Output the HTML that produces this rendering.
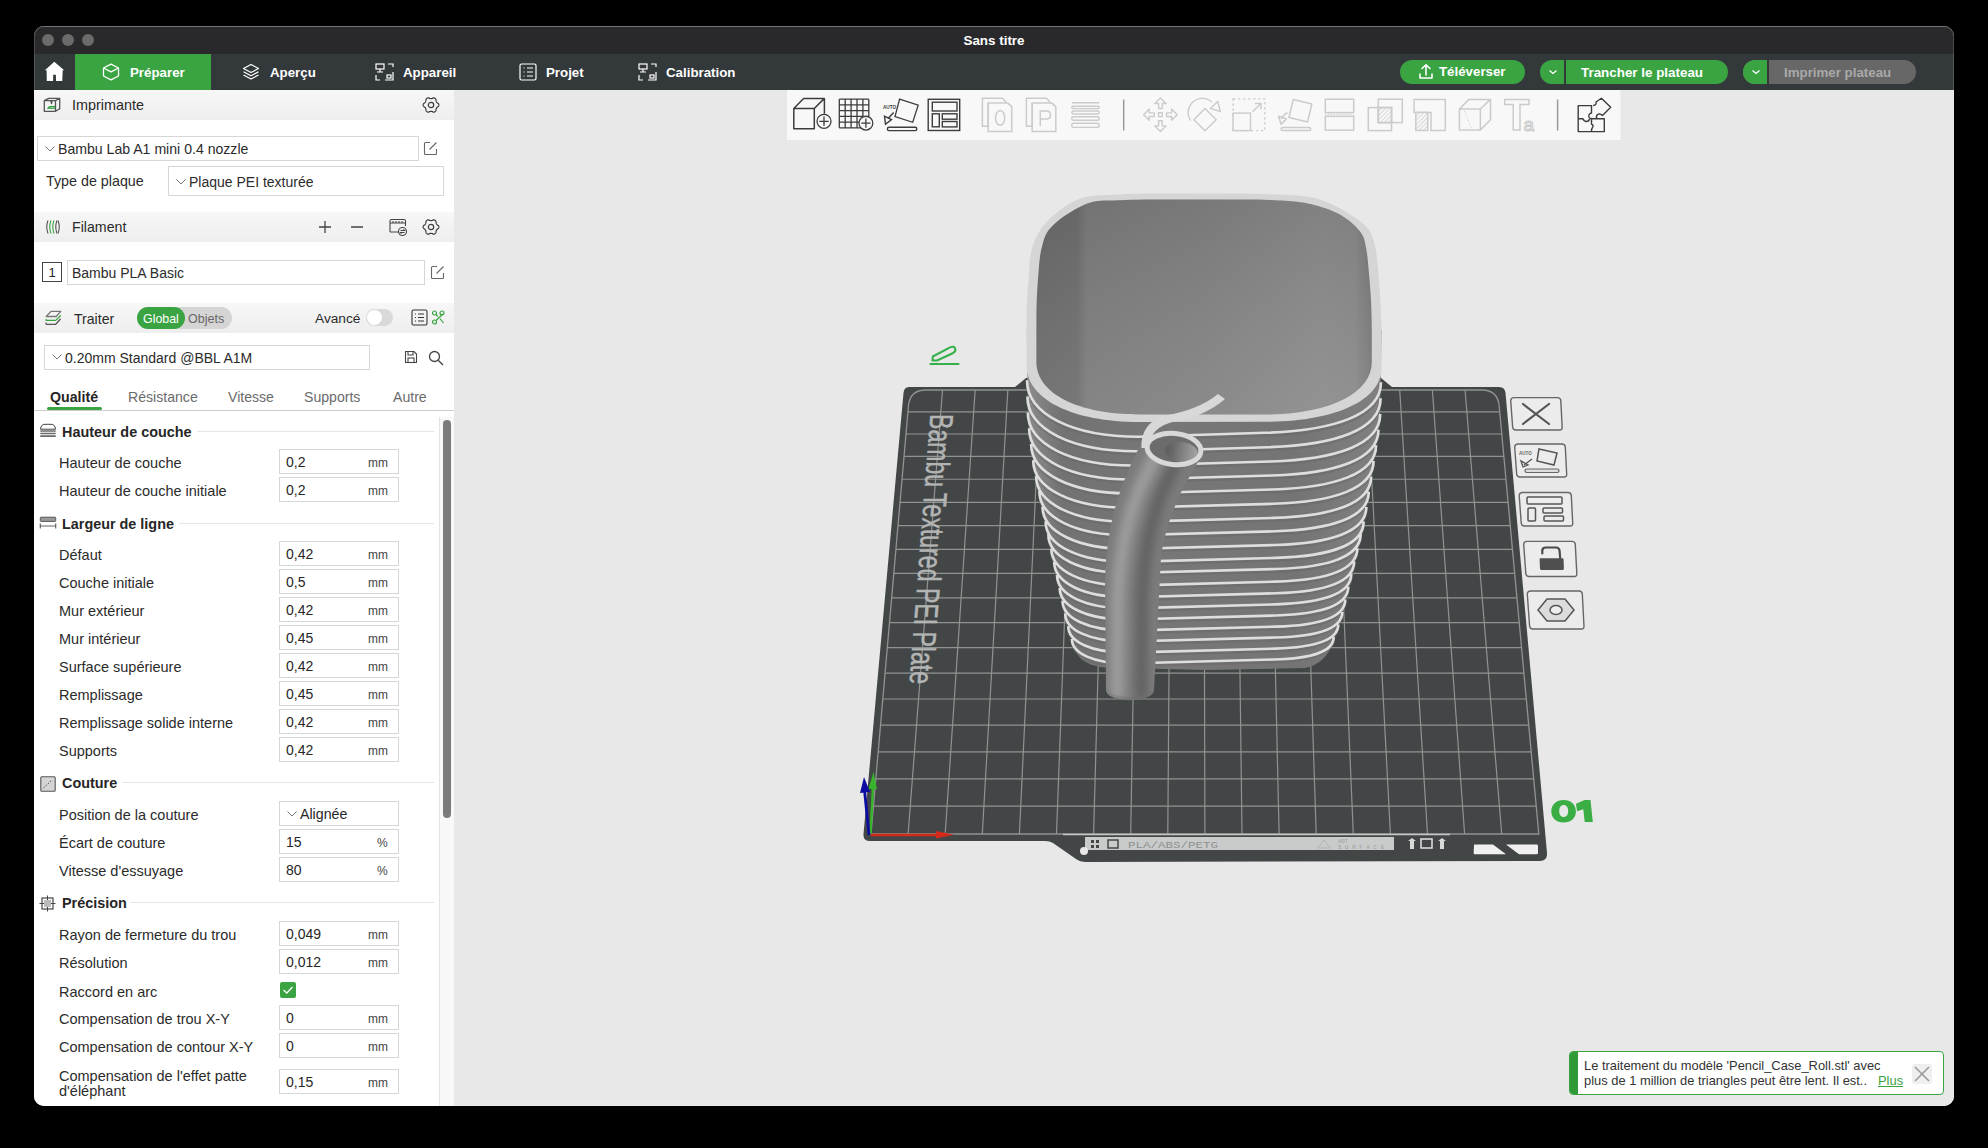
<!DOCTYPE html><html><head><meta charset="utf-8"><style>
*{box-sizing:border-box;margin:0;padding:0}
html,body{width:1988px;height:1148px;overflow:hidden;background:#000;font-family:"Liberation Sans", sans-serif;}
.a{position:absolute}
.t{position:absolute;white-space:nowrap;line-height:1}
.lb{position:absolute;white-space:nowrap;line-height:1;font-size:14.5px;color:#2b2b2b}
.in{position:absolute;background:#fff;border:1px solid #d6d6d6}
.hd{position:absolute;white-space:nowrap;line-height:1;font-size:14.4px;font-weight:bold;color:#262626}
svg{position:absolute;overflow:visible}
#win{position:absolute;left:34px;top:26px;width:1920px;height:1080px;border-radius:10px;overflow:hidden;background:#e8e8e8}
</style></head><body>
<div id="win">
<div class="a" style="left:-34px;top:-26px;width:1988px;height:1148px">

<div class="a" style="left:34px;top:26px;width:1920px;height:28px;background:#29292b;border-top:1px solid #5a5a5c"></div>
<div class="a" style="left:42px;top:34px;width:12px;height:12px;border-radius:6px;background:#6a6a6b"></div>
<div class="a" style="left:62px;top:34px;width:12px;height:12px;border-radius:6px;background:#6a6a6b"></div>
<div class="a" style="left:82px;top:34px;width:12px;height:12px;border-radius:6px;background:#6a6a6b"></div>
<div class="t" style="left:34px;width:1920px;top:33.5px;text-align:center;color:#fff;font-weight:bold;font-size:13.4px">Sans titre</div>
<div class="a" style="left:34px;top:54px;width:1920px;height:36px;background:#33383b"></div>
<div class="a" style="left:75px;top:54px;width:136px;height:36px;background:#3aa443"></div>
<svg style="left:44px;top:61px" width="21" height="21" viewBox="0 0 21 21"><path d="M10.3 0.8 L20.2 9.3 L18.7 9.3 L18.3 20 L12 20 L11.9 13.8 L9.2 13.8 L9.1 20 L2.8 20 L2.6 9.3 L0.9 9.3 Z" fill="#fff"/></svg>
<svg style="left:102px;top:63px" width="18" height="18" viewBox="0 0 18 18" fill="none" stroke="#fff" stroke-width="1.3" stroke-linejoin="round"><path d="M9 1.2 L16.5 5 L16.5 13 L9 16.8 L1.5 13 L1.5 5 Z"/><path d="M1.5 5 L9 8.8 L16.5 5"/></svg>
<div class="t" style="left:130px;top:66px;color:#fff;font-weight:bold;font-size:13.3px">Préparer</div>
<svg style="left:242px;top:63px" width="18" height="18" viewBox="0 0 18 18" fill="none" stroke="#fff" stroke-width="1.2" stroke-linejoin="round"><path d="M9 1.5 L16.5 5.5 L9 9.5 L1.5 5.5 Z"/><path d="M1.5 8.8 L9 12.8 L16.5 8.8"/><path d="M1.5 12 L9 16 L16.5 12"/></svg>
<div class="t" style="left:270px;top:66px;color:#fff;font-weight:bold;font-size:13.3px">Aperçu</div>
<svg style="left:375px;top:63px" width="19" height="18" viewBox="0 0 19 18" fill="none" stroke="#fff" stroke-width="1.2"><rect x="1" y="1" width="8" height="5"/><path d="M5 6 V9 M2 9 H8"/><path d="M13 1 H18 V4"/><path d="M1 12 V17 H5"/><path d="M18 9 V17 H10"/><rect x="12" y="12" width="4" height="3"/></svg>
<div class="t" style="left:403px;top:66px;color:#fff;font-weight:bold;font-size:13.3px">Appareil</div>
<svg style="left:519px;top:63px" width="18" height="18" viewBox="0 0 18 18" fill="none" stroke="#fff" stroke-width="1.2"><rect x="1" y="1" width="16" height="16" rx="1.5"/><path d="M4.5 5 H5.5 M4.5 9 H5.5 M4.5 13 H5.5 M8 5 H14 M8 9 H14 M8 13 H14"/></svg>
<div class="t" style="left:546px;top:66px;color:#fff;font-weight:bold;font-size:13.3px">Projet</div>
<svg style="left:638px;top:63px" width="19" height="18" viewBox="0 0 19 18" fill="none" stroke="#fff" stroke-width="1.2"><rect x="1" y="1" width="8" height="5"/><path d="M5 6 V9 M2 9 H8"/><path d="M13 1 H18 V4"/><path d="M1 12 V17 H5"/><path d="M18 9 V17 H10"/><rect x="12" y="12" width="4" height="3"/></svg>
<div class="t" style="left:666px;top:66px;color:#fff;font-weight:bold;font-size:13.3px">Calibration</div>
<div class="a" style="left:1400px;top:60px;width:125px;height:24px;border-radius:12px;background:#3aa443"></div>
<svg style="left:1418px;top:63px" width="16" height="17" viewBox="0 0 16 17" fill="none" stroke="#fff" stroke-width="1.6" stroke-linecap="round" stroke-linejoin="round"><path d="M8 12 V2 M4 5.5 L8 1.8 L12 5.5"/><path d="M2 11 V15 H14 V11"/></svg>
<div class="t" style="left:1439px;top:65px;color:#fff;font-weight:bold;font-size:13.3px">Téléverser</div>
<div class="a" style="left:1540px;top:60px;width:188px;height:24px;border-radius:12px;background:#3aa443"></div>
<div class="a" style="left:1564px;top:60px;width:2px;height:24px;background:#33383b"></div>
<svg style="left:1547px;top:68px" width="12" height="8" viewBox="0 0 12 8" fill="none" stroke="#fff" stroke-width="1.3"><path d="M2.5 2.5 L6 5.5 L9.5 2.5"/></svg>
<div class="t" style="left:1581px;top:66px;color:#fff;font-weight:bold;font-size:13.4px">Trancher le plateau</div>
<div class="a" style="left:1743px;top:60px;width:173px;height:24px;border-radius:12px;background:#676767"></div>
<div class="a" style="left:1743px;top:60px;width:25px;height:24px;border-radius:12px 0 0 12px;background:#3aa443"></div>
<div class="a" style="left:1767px;top:60px;width:2px;height:24px;background:#33383b"></div>
<svg style="left:1750px;top:68px" width="12" height="8" viewBox="0 0 12 8" fill="none" stroke="#fff" stroke-width="1.3"><path d="M2.5 2.5 L6 5.5 L9.5 2.5"/></svg>
<div class="t" style="left:1784px;top:66px;color:#a9a9a9;font-weight:bold;font-size:13.3px">Imprimer plateau</div>
<div class="a" style="left:34px;top:90px;width:420px;height:1016px;background:#fff"></div>
<div class="a" style="left:34px;top:90px;width:420px;height:30px;background:linear-gradient(#f7f7f7,#eeeeee)"></div>
<svg style="left:38px;top:92px" width="30" height="30" viewBox="0 0 30 30" fill="none" stroke="#555" stroke-width="1.3" stroke-linejoin="round"><path d="M6.3 8.6 H17.5 V19.3 H6.3 Z M6.3 8.6 L10.7 6.3 H21.7 L17.5 8.6 M21.7 6.3 V16.7 L17.5 19.3"/><path d="M12.9 8.6 L13.5 11.6 L14.1 8.6" fill="#555"/><path d="M8.8 16.8 Q10.2 14.1 12.4 14.1 H17 V16.8 Z" fill="#2a9a35" stroke="none"/><path d="M12.2 15.45 H17" stroke="#b6dcb9" stroke-width="0.7"/></svg>
<div class="lb" style="left:72px;top:98px;font-size:14.4px">Imprimante</div>
<svg style="left:422px;top:96px" width="18" height="18" viewBox="0 0 18 18" fill="none" stroke="#3e3e3e" stroke-width="1.2"><path d="M16.85 9.00 L16.82 9.34 L16.75 9.68 L16.62 10.00 L16.45 10.31 L16.22 10.60 L15.86 10.84 L15.49 11.05 L15.24 11.27 L15.02 11.49 L14.82 11.71 L14.65 11.94 L14.50 12.17 L14.37 12.42 L14.26 12.68 L14.17 12.96 L14.09 13.27 L14.02 13.60 L14.02 14.02 L13.99 14.45 L13.86 14.79 L13.68 15.10 L13.46 15.37 L13.21 15.61 L12.93 15.80 L12.62 15.95 L12.29 16.05 L11.94 16.10 L11.59 16.11 L11.22 16.05 L10.84 15.86 L10.47 15.65 L10.15 15.54 L9.85 15.46 L9.56 15.40 L9.28 15.36 L9.00 15.35 L8.72 15.36 L8.44 15.40 L8.15 15.46 L7.85 15.54 L7.53 15.65 L7.16 15.86 L6.78 16.05 L6.41 16.11 L6.06 16.10 L5.71 16.05 L5.38 15.95 L5.08 15.80 L4.79 15.61 L4.54 15.37 L4.32 15.10 L4.14 14.79 L4.01 14.45 L3.98 14.02 L3.98 13.60 L3.91 13.27 L3.83 12.96 L3.74 12.68 L3.63 12.42 L3.50 12.18 L3.35 11.94 L3.18 11.71 L2.98 11.49 L2.76 11.27 L2.51 11.05 L2.14 10.84 L1.78 10.60 L1.55 10.31 L1.38 10.00 L1.25 9.68 L1.18 9.34 L1.15 9.00 L1.18 8.66 L1.25 8.32 L1.38 8.00 L1.55 7.69 L1.78 7.40 L2.14 7.16 L2.51 6.95 L2.76 6.73 L2.98 6.51 L3.18 6.29 L3.35 6.06 L3.50 5.82 L3.63 5.58 L3.74 5.32 L3.83 5.04 L3.91 4.73 L3.98 4.40 L3.98 3.98 L4.01 3.55 L4.14 3.21 L4.32 2.90 L4.54 2.63 L4.79 2.39 L5.07 2.20 L5.38 2.05 L5.71 1.95 L6.06 1.90 L6.41 1.89 L6.78 1.95 L7.16 2.14 L7.53 2.35 L7.85 2.46 L8.15 2.54 L8.44 2.60 L8.72 2.64 L9.00 2.65 L9.28 2.64 L9.56 2.60 L9.85 2.54 L10.15 2.46 L10.47 2.35 L10.84 2.14 L11.22 1.95 L11.59 1.89 L11.94 1.90 L12.29 1.95 L12.62 2.05 L12.92 2.20 L13.21 2.39 L13.46 2.63 L13.68 2.90 L13.86 3.21 L13.99 3.55 L14.02 3.98 L14.02 4.40 L14.09 4.73 L14.17 5.04 L14.26 5.32 L14.37 5.58 L14.50 5.83 L14.65 6.06 L14.82 6.29 L15.02 6.51 L15.24 6.73 L15.49 6.95 L15.86 7.16 L16.22 7.40 L16.45 7.69 L16.62 8.00 L16.75 8.32 L16.82 8.66 Z"/><circle cx="9" cy="9" r="2.7"/></svg>
<div class="in" style="left:37px;top:136px;width:382px;height:25px"></div>
<svg style="left:44px;top:145px" width="12" height="8" viewBox="0 0 12 8" fill="none" stroke="#777" stroke-width="1"><path d="M1.5 1.5 L6 6 L10.5 1.5"/></svg>
<div class="lb" style="left:58px;top:142px;font-size:14.1px">Bambu Lab A1 mini 0.4 nozzle</div>
<svg style="left:423px;top:141px" width="15" height="15" viewBox="0 0 15 15" fill="none" stroke="#666" stroke-width="1.1"><path d="M7 1.5 H2.5 Q1.5 1.5 1.5 2.5 V12.5 Q1.5 13.5 2.5 13.5 H12.5 Q13.5 13.5 13.5 12.5 V8"/><path d="M6.5 8.5 L13.5 1.5"/></svg>
<div class="lb" style="left:46px;top:174px;font-size:14.3px">Type de plaque</div>
<div class="in" style="left:168px;top:166px;width:276px;height:30px"></div>
<svg style="left:175px;top:178px" width="12" height="8" viewBox="0 0 12 8" fill="none" stroke="#777" stroke-width="1"><path d="M1.5 1.5 L6 6 L10.5 1.5"/></svg>
<div class="lb" style="left:189px;top:175px;font-size:14px">Plaque PEI texturée</div>
<div class="a" style="left:34px;top:212px;width:420px;height:30px;background:linear-gradient(#f7f7f7,#eeeeee)"></div>
<svg style="left:45px;top:219px" width="16" height="16" viewBox="0 0 16 16" fill="none" stroke-width="1.1"><path d="M3 1.5 Q0.5 8 3 14.5" stroke="#555"/><path d="M13 1.5 Q15.5 8 13 14.5" stroke="#555"/><path d="M6 1.5 Q3.5 8 6 14.5 M9 1.5 Q6.5 8 9 14.5" stroke="#3aa443"/><path d="M12 1.5 Q9.5 8 12 14.5" stroke="#555"/></svg>
<div class="lb" style="left:72px;top:220px;font-size:14.2px">Filament</div>
<svg style="left:318px;top:220px" width="14" height="14" viewBox="0 0 14 14" stroke="#444" stroke-width="1.3"><path d="M7 1 V13 M1 7 H13"/></svg>
<svg style="left:350px;top:220px" width="14" height="14" viewBox="0 0 14 14" stroke="#444" stroke-width="1.3"><path d="M1 7 H13"/></svg>
<svg style="left:389px;top:218px" width="19" height="18" viewBox="0 0 19 18" fill="none" stroke="#444" stroke-width="1.1"><path d="M1 14 V3 Q1 1.5 2.5 1.5 H15 Q16.5 1.5 16.5 3 V8"/><path d="M1 5 H16.5 M4 3 V5 M7 3 V5 M10 3 V5 M13 3 V5"/><path d="M1 14 H9"/><circle cx="13.5" cy="13.5" r="4"/><path d="M11.5 12.5 H15.5 L14.5 11.5 M15.5 14.5 H11.5 L12.5 15.5"/></svg>
<svg style="left:422px;top:218px" width="18" height="18" viewBox="0 0 18 18" fill="none" stroke="#3e3e3e" stroke-width="1.2"><path d="M16.85 9.00 L16.82 9.34 L16.75 9.68 L16.62 10.00 L16.45 10.31 L16.22 10.60 L15.86 10.84 L15.49 11.05 L15.24 11.27 L15.02 11.49 L14.82 11.71 L14.65 11.94 L14.50 12.17 L14.37 12.42 L14.26 12.68 L14.17 12.96 L14.09 13.27 L14.02 13.60 L14.02 14.02 L13.99 14.45 L13.86 14.79 L13.68 15.10 L13.46 15.37 L13.21 15.61 L12.93 15.80 L12.62 15.95 L12.29 16.05 L11.94 16.10 L11.59 16.11 L11.22 16.05 L10.84 15.86 L10.47 15.65 L10.15 15.54 L9.85 15.46 L9.56 15.40 L9.28 15.36 L9.00 15.35 L8.72 15.36 L8.44 15.40 L8.15 15.46 L7.85 15.54 L7.53 15.65 L7.16 15.86 L6.78 16.05 L6.41 16.11 L6.06 16.10 L5.71 16.05 L5.38 15.95 L5.08 15.80 L4.79 15.61 L4.54 15.37 L4.32 15.10 L4.14 14.79 L4.01 14.45 L3.98 14.02 L3.98 13.60 L3.91 13.27 L3.83 12.96 L3.74 12.68 L3.63 12.42 L3.50 12.18 L3.35 11.94 L3.18 11.71 L2.98 11.49 L2.76 11.27 L2.51 11.05 L2.14 10.84 L1.78 10.60 L1.55 10.31 L1.38 10.00 L1.25 9.68 L1.18 9.34 L1.15 9.00 L1.18 8.66 L1.25 8.32 L1.38 8.00 L1.55 7.69 L1.78 7.40 L2.14 7.16 L2.51 6.95 L2.76 6.73 L2.98 6.51 L3.18 6.29 L3.35 6.06 L3.50 5.82 L3.63 5.58 L3.74 5.32 L3.83 5.04 L3.91 4.73 L3.98 4.40 L3.98 3.98 L4.01 3.55 L4.14 3.21 L4.32 2.90 L4.54 2.63 L4.79 2.39 L5.07 2.20 L5.38 2.05 L5.71 1.95 L6.06 1.90 L6.41 1.89 L6.78 1.95 L7.16 2.14 L7.53 2.35 L7.85 2.46 L8.15 2.54 L8.44 2.60 L8.72 2.64 L9.00 2.65 L9.28 2.64 L9.56 2.60 L9.85 2.54 L10.15 2.46 L10.47 2.35 L10.84 2.14 L11.22 1.95 L11.59 1.89 L11.94 1.90 L12.29 1.95 L12.62 2.05 L12.92 2.20 L13.21 2.39 L13.46 2.63 L13.68 2.90 L13.86 3.21 L13.99 3.55 L14.02 3.98 L14.02 4.40 L14.09 4.73 L14.17 5.04 L14.26 5.32 L14.37 5.58 L14.50 5.83 L14.65 6.06 L14.82 6.29 L15.02 6.51 L15.24 6.73 L15.49 6.95 L15.86 7.16 L16.22 7.40 L16.45 7.69 L16.62 8.00 L16.75 8.32 L16.82 8.66 Z"/><circle cx="9" cy="9" r="2.7"/></svg>
<div class="a" style="left:42px;top:262px;width:20px;height:20px;border:1px solid #444;background:#fff"></div>
<div class="t" style="left:42px;width:20px;text-align:center;top:266px;font-size:13px;color:#222">1</div>
<div class="in" style="left:67px;top:260px;width:358px;height:25px"></div>
<div class="lb" style="left:72px;top:266px;font-size:14px">Bambu PLA Basic</div>
<svg style="left:430px;top:265px" width="15" height="15" viewBox="0 0 15 15" fill="none" stroke="#666" stroke-width="1.1"><path d="M7 1.5 H2.5 Q1.5 1.5 1.5 2.5 V12.5 Q1.5 13.5 2.5 13.5 H12.5 Q13.5 13.5 13.5 12.5 V8"/><path d="M6.5 8.5 L13.5 1.5"/></svg>
<div class="a" style="left:34px;top:303px;width:420px;height:30px;background:linear-gradient(#f7f7f7,#eeeeee)"></div>
<svg style="left:36px;top:300px" width="30" height="36" viewBox="0 0 30 36" fill="none" stroke-width="1.3" stroke-linejoin="round" stroke-linecap="round"><path d="M10.2 16.5 L15 11.4 H24.8 L20.1 16.5 Z" stroke="#777"/><path d="M10 19.6 L10.3 20.4 H19.7 L24.5 15.7" stroke="#3aa443"/><path d="M10 23.2 L10.3 24.3 H19.7 L24.3 19.3" stroke="#555"/></svg>
<div class="lb" style="left:74px;top:312px;font-size:14.1px">Traiter</div>
<div class="a" style="left:137px;top:307px;width:95px;height:22px;border-radius:11px;background:#d5d5d5"></div>
<div class="a" style="left:137px;top:307px;width:48px;height:22px;border-radius:11px;background:#3aa443"></div>
<div class="t" style="left:143px;top:312.5px;font-size:12.4px;color:#fff">Global</div>
<div class="t" style="left:188px;top:312.5px;font-size:12.5px;color:#666">Objets</div>
<div class="lb" style="left:315px;top:312px;font-size:13.7px">Avancé</div>
<div class="a" style="left:366px;top:309px;width:27px;height:17px;border-radius:9px;background:#d9d9d9"></div>
<div class="a" style="left:367px;top:310px;width:15px;height:15px;border-radius:8px;background:#fff"></div>
<svg style="left:411px;top:309px" width="17" height="17" viewBox="0 0 17 17" fill="none" stroke="#333" stroke-width="1.1"><rect x="1" y="1" width="15" height="15" rx="1.5"/><path d="M4 5 H5 M4 8.5 H5 M4 12 H5 M7 5 H13 M7 8.5 H13 M7 12 H13"/></svg>
<svg style="left:431px;top:310px" width="14" height="15" viewBox="0 0 14 15" fill="none" stroke="#3aa443" stroke-width="1.2"><circle cx="3.5" cy="3" r="2"/><circle cx="11" cy="3" r="2"/><circle cx="3.5" cy="12" r="2"/><path d="M5 10.5 L12 4 M5 4.5 L7 6.5 M9 8.5 L12.5 13"/></svg>
<div class="in" style="left:44px;top:345px;width:326px;height:25px"></div>
<svg style="left:51px;top:353px" width="12" height="8" viewBox="0 0 12 8" fill="none" stroke="#777" stroke-width="1"><path d="M1.5 1.5 L6 6 L10.5 1.5"/></svg>
<div class="lb" style="left:65px;top:351px;font-size:14px">0.20mm Standard @BBL A1M</div>
<svg style="left:404px;top:350px" width="14" height="14" viewBox="0 0 14 14" fill="none" stroke="#444" stroke-width="1.1"><path d="M1.5 1.5 H10 L12.5 4 V12.5 H1.5 Z"/><path d="M4 1.5 V5 H9 V1.5"/><rect x="4" y="8" width="6" height="4.5"/></svg>
<svg style="left:428px;top:350px" width="16" height="16" viewBox="0 0 16 16" fill="none" stroke="#444" stroke-width="1.3"><circle cx="6.5" cy="6.5" r="5"/><path d="M10.2 10.2 L15 15"/></svg>
<div class="t" style="left:50px;top:390px;font-size:14.1px;color:#262626;font-weight:bold;font-size:14.2px">Qualité</div>
<div class="t" style="left:128px;top:390px;font-size:14.1px;color:#6b6b6b;">Résistance</div>
<div class="t" style="left:228px;top:390px;font-size:14.1px;color:#6b6b6b;">Vitesse</div>
<div class="t" style="left:304px;top:390px;font-size:14.1px;color:#6b6b6b;">Supports</div>
<div class="t" style="left:393px;top:390px;font-size:14.1px;color:#6b6b6b;">Autre</div>
<div class="a" style="left:34px;top:410px;width:420px;height:1px;background:#cdcdcd"></div>
<div class="a" style="left:47px;top:407px;width:55px;height:3px;border-radius:2px;background:#3aa443"></div>
<div class="a" style="left:439px;top:417px;width:15px;height:689px;background:#f8f8f8;border-left:1px solid #e3e3e3"></div>
<div class="a" style="left:443px;top:420px;width:8px;height:398px;border-radius:4px;background:#7b7b7b"></div>
<svg style="left:38px;top:422px" width="20" height="18" viewBox="0 0 20 18" fill="none" stroke="#444" stroke-width="1"><path d="M2.5 7.2 Q3 2.3 7 2.3 H13 Q17 2.3 17.5 7.2 Z"/><path d="M2.3 8.3 H17.7 V9.7 H2.3 Z M2.3 10.8 H17.7 V12.2 H2.3 Z M2.3 13.3 H17.7 V15 H2.3 Z" fill="#6a6a6a" stroke="none"/></svg>
<div class="hd" style="left:62px;top:425px">Hauteur de couche</div>
<div class="a" style="left:197px;top:431px;width:237px;height:1px;background:#e6e6e6"></div>
<div class="lb" style="left:59px;top:456px">Hauteur de couche</div>
<div class="in" style="left:279px;top:449px;width:120px;height:25px"></div>
<div class="t" style="left:286px;top:455px;font-size:14px;color:#262626">0,2</div>
<div class="t" style="left:368px;top:457px;font-size:12px;color:#444">mm</div>
<div class="lb" style="left:59px;top:484px">Hauteur de couche initiale</div>
<div class="in" style="left:279px;top:477px;width:120px;height:25px"></div>
<div class="t" style="left:286px;top:483px;font-size:14px;color:#262626">0,2</div>
<div class="t" style="left:368px;top:485px;font-size:12px;color:#444">mm</div>
<svg style="left:38px;top:515px" width="20" height="16" viewBox="0 0 20 16" fill="none"><rect x="2.3" y="2.2" width="15.4" height="4.2" rx="0.8" fill="#999" stroke="#555" stroke-width="1"/><path d="M2.3 8.5 V13.5 M17.7 8.5 V13.5 M2.3 11 H17.7" stroke="#666" stroke-width="1.2"/></svg>
<div class="hd" style="left:62px;top:517px">Largeur de ligne</div>
<div class="a" style="left:179px;top:523px;width:255px;height:1px;background:#e6e6e6"></div>
<div class="lb" style="left:59px;top:548px">Défaut</div>
<div class="in" style="left:279px;top:541px;width:120px;height:25px"></div>
<div class="t" style="left:286px;top:547px;font-size:14px;color:#262626">0,42</div>
<div class="t" style="left:368px;top:549px;font-size:12px;color:#444">mm</div>
<div class="lb" style="left:59px;top:576px">Couche initiale</div>
<div class="in" style="left:279px;top:569px;width:120px;height:25px"></div>
<div class="t" style="left:286px;top:575px;font-size:14px;color:#262626">0,5</div>
<div class="t" style="left:368px;top:577px;font-size:12px;color:#444">mm</div>
<div class="lb" style="left:59px;top:604px">Mur extérieur</div>
<div class="in" style="left:279px;top:597px;width:120px;height:25px"></div>
<div class="t" style="left:286px;top:603px;font-size:14px;color:#262626">0,42</div>
<div class="t" style="left:368px;top:605px;font-size:12px;color:#444">mm</div>
<div class="lb" style="left:59px;top:632px">Mur intérieur</div>
<div class="in" style="left:279px;top:625px;width:120px;height:25px"></div>
<div class="t" style="left:286px;top:631px;font-size:14px;color:#262626">0,45</div>
<div class="t" style="left:368px;top:633px;font-size:12px;color:#444">mm</div>
<div class="lb" style="left:59px;top:660px">Surface supérieure</div>
<div class="in" style="left:279px;top:653px;width:120px;height:25px"></div>
<div class="t" style="left:286px;top:659px;font-size:14px;color:#262626">0,42</div>
<div class="t" style="left:368px;top:661px;font-size:12px;color:#444">mm</div>
<div class="lb" style="left:59px;top:688px">Remplissage</div>
<div class="in" style="left:279px;top:681px;width:120px;height:25px"></div>
<div class="t" style="left:286px;top:687px;font-size:14px;color:#262626">0,45</div>
<div class="t" style="left:368px;top:689px;font-size:12px;color:#444">mm</div>
<div class="lb" style="left:59px;top:716px">Remplissage solide interne</div>
<div class="in" style="left:279px;top:709px;width:120px;height:25px"></div>
<div class="t" style="left:286px;top:715px;font-size:14px;color:#262626">0,42</div>
<div class="t" style="left:368px;top:717px;font-size:12px;color:#444">mm</div>
<div class="lb" style="left:59px;top:744px">Supports</div>
<div class="in" style="left:279px;top:737px;width:120px;height:25px"></div>
<div class="t" style="left:286px;top:743px;font-size:14px;color:#262626">0,42</div>
<div class="t" style="left:368px;top:745px;font-size:12px;color:#444">mm</div>
<svg style="left:40px;top:776px" width="16" height="16" viewBox="0 0 16 16" fill="none"><rect x="0.8" y="0.8" width="14.4" height="14.4" rx="1" fill="#d5d5d5" stroke="#555" stroke-width="1.1"/><path d="M3.5 12 L12 4" stroke="#444" stroke-width="1" stroke-dasharray="1.5 1.5"/></svg>
<div class="hd" style="left:62px;top:776px">Couture</div>
<div class="a" style="left:122px;top:782px;width:312px;height:1px;background:#e6e6e6"></div>
<div class="lb" style="left:59px;top:808px">Position de la couture</div>
<div class="in" style="left:279px;top:801px;width:120px;height:25px"></div>
<svg style="left:286px;top:810px" width="12" height="8" viewBox="0 0 12 8" fill="none" stroke="#777" stroke-width="1"><path d="M1.5 1.5 L6 6 L10.5 1.5"/></svg>
<div class="t" style="left:300px;top:807px;font-size:14.2px;color:#262626">Alignée</div>
<div class="lb" style="left:59px;top:836px">Écart de couture</div>
<div class="in" style="left:279px;top:829px;width:120px;height:25px"></div>
<div class="t" style="left:286px;top:835px;font-size:14px;color:#262626">15</div>
<div class="t" style="left:377px;top:837px;font-size:12px;color:#444">%</div>
<div class="lb" style="left:59px;top:864px">Vitesse d'essuyage</div>
<div class="in" style="left:279px;top:857px;width:120px;height:25px"></div>
<div class="t" style="left:286px;top:863px;font-size:14px;color:#262626">80</div>
<div class="t" style="left:377px;top:865px;font-size:12px;color:#444">%</div>
<svg style="left:39px;top:895px" width="17" height="17" viewBox="0 0 17 17" fill="none" stroke="#444" stroke-width="1.2"><rect x="3" y="3" width="11" height="11"/><path d="M8.5 0.5 V16.5 M0.5 8.5 H16.5" stroke-width="1"/><rect x="5" y="5" width="7" height="7" fill="#bbb" stroke="none"/></svg>
<div class="hd" style="left:62px;top:896px">Précision</div>
<div class="a" style="left:130px;top:902px;width:304px;height:1px;background:#e6e6e6"></div>
<div class="lb" style="left:59px;top:928px">Rayon de fermeture du trou</div>
<div class="in" style="left:279px;top:921px;width:120px;height:25px"></div>
<div class="t" style="left:286px;top:927px;font-size:14px;color:#262626">0,049</div>
<div class="t" style="left:368px;top:929px;font-size:12px;color:#444">mm</div>
<div class="lb" style="left:59px;top:956px">Résolution</div>
<div class="in" style="left:279px;top:949px;width:120px;height:25px"></div>
<div class="t" style="left:286px;top:955px;font-size:14px;color:#262626">0,012</div>
<div class="t" style="left:368px;top:957px;font-size:12px;color:#444">mm</div>
<div class="lb" style="left:59px;top:985px">Raccord en arc</div>
<div class="a" style="left:280px;top:982px;width:16px;height:16px;border-radius:2px;background:#3aa443"></div>
<svg style="left:280px;top:982px" width="16" height="16" viewBox="0 0 16 16" fill="none" stroke="#fff" stroke-width="1.3"><path d="M3.5 8 L6.8 11 L12.5 5"/></svg>
<div class="lb" style="left:59px;top:1012px">Compensation de trou X-Y</div>
<div class="in" style="left:279px;top:1005px;width:120px;height:25px"></div>
<div class="t" style="left:286px;top:1011px;font-size:14px;color:#262626">0</div>
<div class="t" style="left:368px;top:1013px;font-size:12px;color:#444">mm</div>
<div class="lb" style="left:59px;top:1040px">Compensation de contour X-Y</div>
<div class="in" style="left:279px;top:1033px;width:120px;height:25px"></div>
<div class="t" style="left:286px;top:1039px;font-size:14px;color:#262626">0</div>
<div class="t" style="left:368px;top:1041px;font-size:12px;color:#444">mm</div>
<div class="lb" style="left:59px;top:1069px">Compensation de l'effet patte</div>
<div class="lb" style="left:59px;top:1084px">d'éléphant</div>
<div class="in" style="left:279px;top:1069px;width:120px;height:25px"></div>
<div class="t" style="left:286px;top:1075px;font-size:14px;color:#262626">0,15</div>
<div class="t" style="left:368px;top:1077px;font-size:12px;color:#444">mm</div>
<svg style="left:0;top:0" width="1988" height="1148" viewBox="0 0 1988 1148">
<defs><clipPath id="cv"><rect x="454" y="90" width="1500" height="1016"/></clipPath></defs>
<g clip-path="url(#cv)">
<rect x="454" y="90" width="1500" height="1016" fill="#e8e8e8"/>
<path d="M 909 387 L 1015 387 L 1026 378 L 1381 378 L 1392 387 L 1499 387 Q 1505 387 1505.5 393 L 1547 853 Q 1547.5 861 1540 861 L 1086 862 Q 1080 862 1076 859 L 1053 843 Q 1050 841 1045 841 L 870 841 Q 863 841 863.5 834 L 903.5 393 Q 904 387 909 387 Z" fill="#434647"/>
<path d="M907.94 411.86 L1499.72 411.86 M906.00 434.01 L1501.77 434.01 M904.03 456.47 L1503.85 456.47 M902.04 479.23 L1505.96 479.23 M900.02 502.30 L1508.10 502.30 M897.98 525.70 L1510.26 525.70 M895.90 549.42 L1512.46 549.42 M893.80 573.47 L1514.68 573.47 M891.66 597.86 L1516.94 597.86 M889.50 622.61 L1519.23 622.61 M887.30 647.70 L1521.55 647.70 M885.07 673.16 L1523.91 673.16 M882.81 698.99 L1526.30 698.99 M880.52 725.20 L1528.73 725.20 M878.19 751.80 L1531.19 751.80 M875.83 778.79 L1533.69 778.79 M873.43 806.19 L1536.23 806.19 M942.51 390 L908.10 834 M975.17 390 L945.20 834 M1007.83 390 L982.30 834 M1040.48 390 L1019.40 834 M1073.14 390 L1056.50 834 M1105.80 390 L1093.60 834 M1138.46 390 L1130.70 834 M1171.12 390 L1167.80 834 M1203.78 390 L1204.90 834 M1236.43 390 L1242.00 834 M1269.09 390 L1279.10 834 M1301.75 390 L1316.20 834 M1334.41 390 L1353.30 834 M1367.07 390 L1390.40 834 M1399.72 390 L1427.50 834 M1432.38 390 L1464.60 834 M1465.04 390 L1501.70 834" stroke="#8f9491" stroke-width="1.2" fill="none"/>
<path d="M 871 834 L 908.45 406 Q 909.85 390 925.85 390 L 1481.7 390 Q 1497.7 390 1499.18 406 L 1538.8 834 Z" stroke="#8f9491" stroke-width="1.3" fill="none"/>
<path d="M 1063 834.5 L 1450 834.5" stroke="#c4c6c5" stroke-width="1.6"/>
<g transform="translate(930.5,414) matrix(1,0,-0.078,1,0,0) rotate(90)"><text x="0" y="0" font-family="Liberation Sans" font-size="33" fill="#b3b5b4" stroke="#b3b5b4" stroke-width="0.45" textLength="270" lengthAdjust="spacingAndGlyphs">Bambu Textured PEI Plate</text></g>
<path d="M1085 837 H1394 V850 H1085 Z" fill="#c9cbcb"/>
<circle cx="1084" cy="851" r="4" fill="#e8e8e8"/>
<g fill="#434647"><rect x="1091" y="840" width="3" height="3"/><rect x="1096" y="840" width="3" height="3"/><rect x="1091" y="845" width="3" height="3"/><rect x="1096" y="845" width="3" height="3"/></g>
<rect x="1108" y="840" width="10" height="8" fill="none" stroke="#434647" stroke-width="1.5"/>
<text x="1128" y="847.5" font-family="Liberation Mono" font-size="9" fill="#8d8f8f" textLength="90" lengthAdjust="spacingAndGlyphs">PLA/ABS/PETG</text>
<path d="M1318 848 L1324 840 L1330 848 Z" fill="none" stroke="#aeb0b0" stroke-width="0.8"/>
<text x="1338" y="843" font-family="Liberation Mono" font-size="5.5" fill="#9c9e9e">HOT</text><text x="1338" y="848.5" font-family="Liberation Mono" font-size="5.5" fill="#9c9e9e" textLength="46">SURFACE</text>
<g fill="#d8dada"><path d="M1408 841 L1412 838 L1416 841 L1414 841 L1414 849 L1410 849 L1410 841 Z"/><rect x="1421" y="839" width="11" height="9" fill="none" stroke="#d8dada" stroke-width="1.6"/><path d="M1438 841 L1442 838 L1446 841 L1444 841 L1444 849 L1440 849 L1440 841 Z"/></g>
<path d="M1474 845 Q1473.5 844.6 1475 844.6 L1493 844.6 L1506 854.2 L1474.5 854.2 Q1473.7 854.2 1473.7 853 Z M1506 844.6 L1536.5 844.6 Q1538 844.6 1538 846 L1538 853 Q1538 854.2 1536.5 854.2 L1519 854.2 Z" fill="#f0f0f0"/>
<path d="M871 835 L938 835" stroke="#d42a1a" stroke-width="2.6"/><path d="M936 831 L954 834.8 L936 838.5 Z" fill="#d42a1a"/>
<path d="M870.5 834 L873 787" stroke="#37b42c" stroke-width="2.4"/><path d="M868.5 789 L873.5 772 L877 789 Z" fill="#37b42c"/>
<path d="M869 835 L864.5 790" stroke="#0c0ca0" stroke-width="2.8"/><path d="M860 793 L864 777 L870 792 Z" fill="#0c0ca0"/>
<defs>
<linearGradient id="gInt" x1="0" y1="0" x2="1" y2="0">
 <stop offset="0" stop-color="#6c6c6c"/><stop offset="0.12" stop-color="#6f6f6f"/><stop offset="0.15" stop-color="#7d7d7d"/>
 <stop offset="0.5" stop-color="#838383"/><stop offset="0.85" stop-color="#8c8c8c"/><stop offset="0.95" stop-color="#8a8a8a"/><stop offset="1" stop-color="#7a7a7a"/>
</linearGradient>
<linearGradient id="gIntV" x1="0" y1="0" x2="0" y2="1">
 <stop offset="0" stop-color="#000" stop-opacity="0.08"/><stop offset="1" stop-color="#fff" stop-opacity="0.06"/>
</linearGradient>
<linearGradient id="gBody" x1="0" y1="0" x2="1" y2="0">
 <stop offset="0" stop-color="#8c8c8c"/><stop offset="0.1" stop-color="#727272"/><stop offset="0.4" stop-color="#777777"/>
 <stop offset="0.75" stop-color="#747474"/><stop offset="1" stop-color="#808080"/>
</linearGradient>
<linearGradient id="gTube" x1="0" y1="0" x2="1" y2="0">
 <stop offset="0" stop-color="#8a8a8a"/><stop offset="0.12" stop-color="#959595"/><stop offset="0.45" stop-color="#7d7d7d"/>
 <stop offset="0.62" stop-color="#6a6a6a"/><stop offset="1" stop-color="#767676"/>
</linearGradient>
<linearGradient id="gHole" x1="0" y1="0" x2="1" y2="0">
 <stop offset="0" stop-color="#5e5e5e"/><stop offset="0.25" stop-color="#6a6a6a"/><stop offset="0.7" stop-color="#8f8f8f"/><stop offset="1" stop-color="#a4a4a4"/>
</linearGradient>
</defs>
<path d="M 1026.8 330 L 1028 420 L 1034 466 L 1052 552 L 1067.5 624 L 1076 652 Q 1082 665 1105 667.5 L 1207 670 L 1305 668 Q 1326 664 1334 640 L 1341 617.5 L 1365 516 L 1380 420 L 1381.6 330 Z" fill="url(#gBody)"/>
<path d="M 1027.0 380.3 C 1027.0 413.9 1071.8 436.8 1139.0 436.8 L 1265.0 432.8 C 1334.6 430.7 1381.0 414.7 1381.0 382.3 M 1027.4 396.5 C 1027.4 429.0 1070.9 451.2 1136.2 451.2 L 1267.7 447.2 C 1335.4 445.2 1380.6 429.7 1380.6 398.3 M 1027.8 412.6 C 1027.8 444.0 1070.1 465.5 1133.5 465.5 L 1270.4 461.5 C 1336.2 459.5 1380.2 444.6 1380.2 414.1 M 1029.1 428.3 C 1029.1 458.7 1070.1 479.5 1131.6 479.5 L 1271.8 475.5 C 1335.8 473.6 1378.5 459.3 1378.5 429.7 M 1031.1 444.1 C 1031.1 473.4 1070.9 493.5 1130.5 493.5 L 1272.5 489.5 C 1334.6 487.6 1376.1 473.9 1376.1 445.2 M 1033.2 460.2 C 1033.2 488.5 1071.7 507.8 1129.4 507.8 L 1273.1 503.8 C 1333.4 502.0 1373.6 488.8 1373.6 461.1 M 1036.1 476.1 C 1036.1 503.3 1073.3 521.9 1129.1 521.9 L 1273.8 517.9 C 1332.2 516.1 1371.1 503.5 1371.1 476.7 M 1039.3 491.2 C 1039.3 517.4 1075.2 535.3 1129.1 535.3 L 1274.6 531.3 C 1331.1 529.6 1368.8 517.6 1368.8 491.7 M 1042.5 506.7 C 1042.5 531.8 1077.2 549.0 1129.2 549.0 L 1275.3 545.0 C 1330.0 543.4 1366.4 531.9 1366.4 506.9 M 1045.6 521.4 C 1045.6 545.4 1079.0 561.9 1129.1 561.9 L 1275.7 557.9 C 1328.5 556.3 1363.7 545.4 1363.7 521.4 M 1048.3 534.3 C 1048.3 557.2 1080.4 573.0 1128.6 573.0 L 1275.8 569.0 C 1326.8 567.5 1360.7 557.1 1360.7 534.1 M 1051.3 548.7 C 1051.3 570.5 1082.2 585.6 1128.5 585.6 L 1275.6 581.6 C 1324.7 580.1 1357.4 570.3 1357.4 548.2 M 1054.2 562.1 C 1054.2 582.9 1083.8 597.3 1128.2 597.3 L 1275.6 593.3 C 1322.8 591.9 1354.2 582.7 1354.2 561.5 M 1057.0 575.0 C 1057.0 594.7 1085.3 608.4 1127.8 608.4 L 1275.7 604.4 C 1321.0 603.0 1351.3 594.4 1351.3 574.1 M 1059.7 587.9 C 1059.7 606.6 1086.8 619.5 1127.4 619.5 L 1275.8 615.5 C 1319.3 614.2 1348.3 606.1 1348.3 586.8 M 1062.5 600.8 C 1062.5 618.4 1088.3 630.6 1127.0 630.6 L 1275.9 626.6 C 1317.5 625.4 1345.3 617.8 1345.3 599.4 M 1065.2 613.4 C 1065.2 630.0 1089.8 641.5 1126.6 641.5 L 1276.1 637.5 C 1315.8 636.3 1342.3 629.4 1342.3 611.9 M 1068.2 626.3 C 1068.2 641.8 1091.4 652.6 1126.3 652.6 L 1275.2 648.6 C 1313.1 647.5 1338.3 641.1 1338.3 624.5 M 1071.9 639.0 C 1071.9 653.4 1093.9 663.5 1126.9 663.5 L 1273.7 659.5 C 1309.7 658.4 1333.7 652.6 1333.7 637.0" stroke="#666" stroke-width="2.5" fill="none" transform="translate(0,2.6)" opacity="0.45"/>
<path d="M 1027.0 380.3 C 1027.0 413.9 1071.8 436.8 1139.0 436.8 L 1265.0 432.8 C 1334.6 430.7 1381.0 414.7 1381.0 382.3 M 1027.4 396.5 C 1027.4 429.0 1070.9 451.2 1136.2 451.2 L 1267.7 447.2 C 1335.4 445.2 1380.6 429.7 1380.6 398.3 M 1027.8 412.6 C 1027.8 444.0 1070.1 465.5 1133.5 465.5 L 1270.4 461.5 C 1336.2 459.5 1380.2 444.6 1380.2 414.1 M 1029.1 428.3 C 1029.1 458.7 1070.1 479.5 1131.6 479.5 L 1271.8 475.5 C 1335.8 473.6 1378.5 459.3 1378.5 429.7 M 1031.1 444.1 C 1031.1 473.4 1070.9 493.5 1130.5 493.5 L 1272.5 489.5 C 1334.6 487.6 1376.1 473.9 1376.1 445.2 M 1033.2 460.2 C 1033.2 488.5 1071.7 507.8 1129.4 507.8 L 1273.1 503.8 C 1333.4 502.0 1373.6 488.8 1373.6 461.1 M 1036.1 476.1 C 1036.1 503.3 1073.3 521.9 1129.1 521.9 L 1273.8 517.9 C 1332.2 516.1 1371.1 503.5 1371.1 476.7 M 1039.3 491.2 C 1039.3 517.4 1075.2 535.3 1129.1 535.3 L 1274.6 531.3 C 1331.1 529.6 1368.8 517.6 1368.8 491.7 M 1042.5 506.7 C 1042.5 531.8 1077.2 549.0 1129.2 549.0 L 1275.3 545.0 C 1330.0 543.4 1366.4 531.9 1366.4 506.9 M 1045.6 521.4 C 1045.6 545.4 1079.0 561.9 1129.1 561.9 L 1275.7 557.9 C 1328.5 556.3 1363.7 545.4 1363.7 521.4 M 1048.3 534.3 C 1048.3 557.2 1080.4 573.0 1128.6 573.0 L 1275.8 569.0 C 1326.8 567.5 1360.7 557.1 1360.7 534.1 M 1051.3 548.7 C 1051.3 570.5 1082.2 585.6 1128.5 585.6 L 1275.6 581.6 C 1324.7 580.1 1357.4 570.3 1357.4 548.2 M 1054.2 562.1 C 1054.2 582.9 1083.8 597.3 1128.2 597.3 L 1275.6 593.3 C 1322.8 591.9 1354.2 582.7 1354.2 561.5 M 1057.0 575.0 C 1057.0 594.7 1085.3 608.4 1127.8 608.4 L 1275.7 604.4 C 1321.0 603.0 1351.3 594.4 1351.3 574.1 M 1059.7 587.9 C 1059.7 606.6 1086.8 619.5 1127.4 619.5 L 1275.8 615.5 C 1319.3 614.2 1348.3 606.1 1348.3 586.8 M 1062.5 600.8 C 1062.5 618.4 1088.3 630.6 1127.0 630.6 L 1275.9 626.6 C 1317.5 625.4 1345.3 617.8 1345.3 599.4 M 1065.2 613.4 C 1065.2 630.0 1089.8 641.5 1126.6 641.5 L 1276.1 637.5 C 1315.8 636.3 1342.3 629.4 1342.3 611.9 M 1068.2 626.3 C 1068.2 641.8 1091.4 652.6 1126.3 652.6 L 1275.2 648.6 C 1313.1 647.5 1338.3 641.1 1338.3 624.5 M 1071.9 639.0 C 1071.9 653.4 1093.9 663.5 1126.9 663.5 L 1273.7 659.5 C 1309.7 658.4 1333.7 652.6 1333.7 637.0" stroke="#dedede" stroke-width="2.6" fill="none"/>
<path d="M 1026.5 365 L 1026.5 330 L 1026.50 330.00 L 1026.52 327.92 L 1026.53 325.84 L 1026.54 323.76 L 1026.55 321.68 L 1026.55 319.61 L 1026.56 317.53 L 1026.57 315.45 L 1026.59 313.37 L 1026.62 311.28 L 1026.67 309.19 L 1026.72 307.10 L 1026.80 305.00 L 1026.89 302.86 L 1027.00 300.72 L 1027.11 298.59 L 1027.24 296.46 L 1027.37 294.32 L 1027.52 292.18 L 1027.67 290.02 L 1027.84 287.86 L 1028.02 285.68 L 1028.20 283.47 L 1028.40 281.25 L 1028.60 279.00 L 1028.81 276.47 L 1028.98 273.88 L 1029.14 271.23 L 1029.30 268.55 L 1029.46 265.84 L 1029.66 263.14 L 1029.89 260.44 L 1030.18 257.77 L 1030.54 255.15 L 1030.99 252.59 L 1031.54 250.10 L 1032.20 247.70 L 1032.87 245.59 L 1033.58 243.53 L 1034.34 241.52 L 1035.15 239.55 L 1036.01 237.61 L 1036.94 235.70 L 1037.94 233.82 L 1039.02 231.97 L 1040.19 230.13 L 1041.46 228.31 L 1042.83 226.50 L 1044.30 224.70 L 1046.35 222.39 L 1048.60 220.02 L 1051.04 217.64 L 1053.63 215.26 L 1056.37 212.91 L 1059.22 210.62 L 1062.18 208.42 L 1065.21 206.33 L 1068.30 204.37 L 1071.42 202.58 L 1074.56 200.98 L 1077.70 199.60 L 1080.85 198.45 L 1084.03 197.53 L 1087.24 196.80 L 1090.51 196.24 L 1093.83 195.82 L 1097.22 195.50 L 1100.69 195.28 L 1104.24 195.10 L 1107.89 194.96 L 1111.64 194.81 L 1115.51 194.63 L 1119.50 194.40 L 1125.29 194.07 L 1131.42 193.82 L 1137.84 193.64 L 1144.49 193.52 L 1151.32 193.46 L 1158.28 193.43 L 1165.33 193.44 L 1172.40 193.47 L 1179.46 193.51 L 1186.44 193.55 L 1193.31 193.59 L 1200.00 193.60 L 1206.41 193.60 L 1212.91 193.58 L 1219.45 193.56 L 1226.01 193.55 L 1232.55 193.55 L 1239.03 193.56 L 1245.44 193.60 L 1251.72 193.67 L 1257.85 193.78 L 1263.80 193.93 L 1269.53 194.14 L 1275.00 194.40 L 1278.94 194.60 L 1282.76 194.78 L 1286.49 194.94 L 1290.12 195.11 L 1293.67 195.30 L 1297.14 195.53 L 1300.54 195.81 L 1303.88 196.16 L 1307.17 196.60 L 1310.41 197.14 L 1313.62 197.80 L 1316.80 198.60 L 1319.66 199.44 L 1322.49 200.38 L 1325.28 201.42 L 1328.03 202.53 L 1330.74 203.71 L 1333.40 204.96 L 1336.02 206.26 L 1338.57 207.60 L 1341.07 208.97 L 1343.51 210.37 L 1345.89 211.78 L 1348.20 213.20 L 1350.20 214.46 L 1352.20 215.73 L 1354.19 217.03 L 1356.14 218.35 L 1358.05 219.70 L 1359.90 221.07 L 1361.68 222.48 L 1363.37 223.91 L 1364.97 225.38 L 1366.44 226.89 L 1367.79 228.42 L 1369.00 230.00 L 1369.89 231.35 L 1370.68 232.71 L 1371.37 234.10 L 1371.97 235.51 L 1372.51 236.94 L 1372.99 238.39 L 1373.42 239.87 L 1373.82 241.38 L 1374.19 242.92 L 1374.56 244.48 L 1374.92 246.07 L 1375.30 247.70 L 1375.73 249.67 L 1376.11 251.70 L 1376.45 253.78 L 1376.75 255.90 L 1377.02 258.06 L 1377.26 260.25 L 1377.49 262.47 L 1377.69 264.71 L 1377.89 266.98 L 1378.09 269.25 L 1378.29 271.52 L 1378.50 273.80 L 1378.73 276.31 L 1378.95 278.87 L 1379.15 281.48 L 1379.35 284.12 L 1379.53 286.77 L 1379.71 289.44 L 1379.87 292.10 L 1380.03 294.75 L 1380.18 297.37 L 1380.33 299.97 L 1380.47 302.51 L 1380.60 305.00 L 1380.71 307.18 L 1380.81 309.33 L 1380.91 311.44 L 1380.99 313.54 L 1381.08 315.61 L 1381.15 317.67 L 1381.23 319.72 L 1381.30 321.77 L 1381.37 323.81 L 1381.44 325.87 L 1381.52 327.93 L 1381.60 330.00 L 1381.6 368 C 1381.60 400.28 1334.96 421.80 1265.00 421.80 L 1140 422 C 1071.90 422.00 1026.50 399.20 1026.50 365.00 Z" fill="#d5d5d5"/>
<path d="M 1036.4 362 L 1036.4 330 L 1036.40 330.00 L 1036.41 327.92 L 1036.42 325.84 L 1036.42 323.76 L 1036.42 321.68 L 1036.42 319.61 L 1036.43 317.53 L 1036.43 315.45 L 1036.45 313.37 L 1036.47 311.28 L 1036.50 309.19 L 1036.54 307.10 L 1036.60 305.00 L 1036.67 302.86 L 1036.74 300.72 L 1036.82 298.59 L 1036.91 296.46 L 1037.00 294.32 L 1037.11 292.18 L 1037.22 290.02 L 1037.35 287.86 L 1037.49 285.68 L 1037.64 283.47 L 1037.81 281.25 L 1038.00 279.00 L 1038.21 276.46 L 1038.41 273.84 L 1038.61 271.17 L 1038.82 268.45 L 1039.04 265.71 L 1039.29 262.97 L 1039.57 260.26 L 1039.89 257.58 L 1040.25 254.97 L 1040.67 252.44 L 1041.15 250.01 L 1041.70 247.70 L 1042.15 245.94 L 1042.59 244.24 L 1043.02 242.59 L 1043.46 240.99 L 1043.93 239.44 L 1044.45 237.91 L 1045.03 236.41 L 1045.70 234.92 L 1046.46 233.45 L 1047.34 231.97 L 1048.34 230.49 L 1049.50 229.00 L 1051.58 226.67 L 1054.06 224.26 L 1056.87 221.80 L 1059.96 219.32 L 1063.27 216.86 L 1066.75 214.46 L 1070.34 212.15 L 1073.98 209.98 L 1077.63 207.97 L 1081.22 206.16 L 1084.69 204.59 L 1088.00 203.30 L 1090.62 202.45 L 1093.17 201.80 L 1095.67 201.30 L 1098.13 200.95 L 1100.60 200.72 L 1103.10 200.58 L 1105.64 200.50 L 1108.26 200.46 L 1110.98 200.44 L 1113.83 200.40 L 1116.83 200.33 L 1120.00 200.20 L 1125.41 199.96 L 1131.27 199.78 L 1137.52 199.65 L 1144.09 199.57 L 1150.90 199.51 L 1157.90 199.49 L 1165.02 199.50 L 1172.19 199.51 L 1179.33 199.54 L 1186.40 199.57 L 1193.31 199.59 L 1200.00 199.60 L 1206.42 199.59 L 1212.95 199.56 L 1219.55 199.52 L 1226.17 199.49 L 1232.78 199.45 L 1239.32 199.44 L 1245.77 199.45 L 1252.07 199.50 L 1258.19 199.59 L 1264.08 199.73 L 1269.70 199.93 L 1275.00 200.20 L 1278.52 200.41 L 1281.91 200.61 L 1285.16 200.81 L 1288.32 201.02 L 1291.38 201.25 L 1294.36 201.51 L 1297.29 201.82 L 1300.17 202.17 L 1303.03 202.59 L 1305.87 203.08 L 1308.73 203.64 L 1311.60 204.30 L 1314.37 205.00 L 1317.16 205.75 L 1319.94 206.56 L 1322.72 207.42 L 1325.47 208.34 L 1328.18 209.31 L 1330.85 210.34 L 1333.45 211.43 L 1335.98 212.58 L 1338.42 213.79 L 1340.77 215.06 L 1343.00 216.40 L 1344.90 217.64 L 1346.78 218.96 L 1348.63 220.34 L 1350.43 221.78 L 1352.17 223.27 L 1353.85 224.79 L 1355.45 226.34 L 1356.95 227.90 L 1358.35 229.47 L 1359.63 231.03 L 1360.79 232.58 L 1361.80 234.10 L 1362.45 235.20 L 1363.00 236.29 L 1363.47 237.36 L 1363.88 238.43 L 1364.23 239.50 L 1364.53 240.58 L 1364.79 241.68 L 1365.03 242.80 L 1365.26 243.96 L 1365.49 245.15 L 1365.74 246.40 L 1366.00 247.70 L 1366.36 249.56 L 1366.69 251.51 L 1366.99 253.55 L 1367.27 255.66 L 1367.52 257.83 L 1367.75 260.05 L 1367.97 262.31 L 1368.19 264.60 L 1368.39 266.90 L 1368.59 269.21 L 1368.79 271.51 L 1369.00 273.80 L 1369.23 276.31 L 1369.45 278.88 L 1369.67 281.48 L 1369.88 284.12 L 1370.08 286.77 L 1370.27 289.44 L 1370.45 292.10 L 1370.63 294.75 L 1370.79 297.37 L 1370.94 299.97 L 1371.08 302.51 L 1371.20 305.00 L 1371.30 307.18 L 1371.37 309.32 L 1371.44 311.44 L 1371.50 313.54 L 1371.54 315.61 L 1371.58 317.67 L 1371.62 319.72 L 1371.65 321.77 L 1371.68 323.81 L 1371.71 325.86 L 1371.75 327.93 L 1371.80 330.00 L 1371.8 362 C 1371.80 393.50 1329.08 414.50 1265.00 414.50 L 1140 414.4 C 1077.84 414.40 1036.40 393.44 1036.40 362.00 Z" fill="url(#gInt)"/>
<path d="M 1036.4 362 L 1036.4 330 L 1036.40 330.00 L 1036.41 327.92 L 1036.42 325.84 L 1036.42 323.76 L 1036.42 321.68 L 1036.42 319.61 L 1036.43 317.53 L 1036.43 315.45 L 1036.45 313.37 L 1036.47 311.28 L 1036.50 309.19 L 1036.54 307.10 L 1036.60 305.00 L 1036.67 302.86 L 1036.74 300.72 L 1036.82 298.59 L 1036.91 296.46 L 1037.00 294.32 L 1037.11 292.18 L 1037.22 290.02 L 1037.35 287.86 L 1037.49 285.68 L 1037.64 283.47 L 1037.81 281.25 L 1038.00 279.00 L 1038.21 276.46 L 1038.41 273.84 L 1038.61 271.17 L 1038.82 268.45 L 1039.04 265.71 L 1039.29 262.97 L 1039.57 260.26 L 1039.89 257.58 L 1040.25 254.97 L 1040.67 252.44 L 1041.15 250.01 L 1041.70 247.70 L 1042.15 245.94 L 1042.59 244.24 L 1043.02 242.59 L 1043.46 240.99 L 1043.93 239.44 L 1044.45 237.91 L 1045.03 236.41 L 1045.70 234.92 L 1046.46 233.45 L 1047.34 231.97 L 1048.34 230.49 L 1049.50 229.00 L 1051.58 226.67 L 1054.06 224.26 L 1056.87 221.80 L 1059.96 219.32 L 1063.27 216.86 L 1066.75 214.46 L 1070.34 212.15 L 1073.98 209.98 L 1077.63 207.97 L 1081.22 206.16 L 1084.69 204.59 L 1088.00 203.30 L 1090.62 202.45 L 1093.17 201.80 L 1095.67 201.30 L 1098.13 200.95 L 1100.60 200.72 L 1103.10 200.58 L 1105.64 200.50 L 1108.26 200.46 L 1110.98 200.44 L 1113.83 200.40 L 1116.83 200.33 L 1120.00 200.20 L 1125.41 199.96 L 1131.27 199.78 L 1137.52 199.65 L 1144.09 199.57 L 1150.90 199.51 L 1157.90 199.49 L 1165.02 199.50 L 1172.19 199.51 L 1179.33 199.54 L 1186.40 199.57 L 1193.31 199.59 L 1200.00 199.60 L 1206.42 199.59 L 1212.95 199.56 L 1219.55 199.52 L 1226.17 199.49 L 1232.78 199.45 L 1239.32 199.44 L 1245.77 199.45 L 1252.07 199.50 L 1258.19 199.59 L 1264.08 199.73 L 1269.70 199.93 L 1275.00 200.20 L 1278.52 200.41 L 1281.91 200.61 L 1285.16 200.81 L 1288.32 201.02 L 1291.38 201.25 L 1294.36 201.51 L 1297.29 201.82 L 1300.17 202.17 L 1303.03 202.59 L 1305.87 203.08 L 1308.73 203.64 L 1311.60 204.30 L 1314.37 205.00 L 1317.16 205.75 L 1319.94 206.56 L 1322.72 207.42 L 1325.47 208.34 L 1328.18 209.31 L 1330.85 210.34 L 1333.45 211.43 L 1335.98 212.58 L 1338.42 213.79 L 1340.77 215.06 L 1343.00 216.40 L 1344.90 217.64 L 1346.78 218.96 L 1348.63 220.34 L 1350.43 221.78 L 1352.17 223.27 L 1353.85 224.79 L 1355.45 226.34 L 1356.95 227.90 L 1358.35 229.47 L 1359.63 231.03 L 1360.79 232.58 L 1361.80 234.10 L 1362.45 235.20 L 1363.00 236.29 L 1363.47 237.36 L 1363.88 238.43 L 1364.23 239.50 L 1364.53 240.58 L 1364.79 241.68 L 1365.03 242.80 L 1365.26 243.96 L 1365.49 245.15 L 1365.74 246.40 L 1366.00 247.70 L 1366.36 249.56 L 1366.69 251.51 L 1366.99 253.55 L 1367.27 255.66 L 1367.52 257.83 L 1367.75 260.05 L 1367.97 262.31 L 1368.19 264.60 L 1368.39 266.90 L 1368.59 269.21 L 1368.79 271.51 L 1369.00 273.80 L 1369.23 276.31 L 1369.45 278.88 L 1369.67 281.48 L 1369.88 284.12 L 1370.08 286.77 L 1370.27 289.44 L 1370.45 292.10 L 1370.63 294.75 L 1370.79 297.37 L 1370.94 299.97 L 1371.08 302.51 L 1371.20 305.00 L 1371.30 307.18 L 1371.37 309.32 L 1371.44 311.44 L 1371.50 313.54 L 1371.54 315.61 L 1371.58 317.67 L 1371.62 319.72 L 1371.65 321.77 L 1371.68 323.81 L 1371.71 325.86 L 1371.75 327.93 L 1371.80 330.00 L 1371.8 362 C 1371.80 393.50 1329.08 414.50 1265.00 414.50 L 1140 414.4 C 1077.84 414.40 1036.40 393.44 1036.40 362.00 Z" fill="url(#gIntV)"/>
<clipPath id="tubeClip"><path d="M 1106 690 L 1105 581 C 1106 545 1112 515 1119 495 C 1126 475 1133 458 1141 444 L 1203 452 C 1195 468 1190 476 1184 486 C 1172 510 1164 535 1161 557 L 1154 690 C 1154 703 1106 703 1106 690 Z"/></clipPath>
<filter id="tblur" x="-50%" y="-10%" width="200%" height="120%"><feGaussianBlur stdDeviation="4.5"/></filter>
<path d="M 1106 690 L 1105 581 C 1106 545 1112 515 1119 495 C 1126 475 1133 458 1141 444 L 1203 452 C 1195 468 1190 476 1184 486 C 1172 510 1164 535 1161 557 L 1154 690 C 1154 703 1106 703 1106 690 Z" fill="#7b7b7b"/>
<g clip-path="url(#tubeClip)"><g filter="url(#tblur)"><path d="M1130 700 L1131 600 C1132 560 1140 520 1152 490 C1160 472 1166 460 1174 446" transform="translate(-13,0)" stroke="#9c9c9c" stroke-width="14" fill="none"/><path d="M1130 700 L1131 600 C1132 560 1140 520 1152 490 C1160 472 1166 460 1174 446" transform="translate(11,0)" stroke="#626262" stroke-width="12" fill="none"/></g></g>
<path d="M 1106 688 C 1108 700 1152 700 1154 688 C 1152 705 1108 705 1106 688 Z" fill="#6e6e6e" opacity="0.35"/>
<path d="M 1218 394 C 1205 405 1185 412 1168 415 C 1150 419 1141 430 1141.5 448 L 1149 448 C 1150 432 1160 424 1178 421 C 1195 418 1212 410 1225 399 Z" fill="#d8d8d8"/>
<ellipse cx="1174" cy="449" rx="27" ry="15.5" transform="rotate(6 1174 449)" fill="#6c6c6c"/>
<ellipse cx="1181.5" cy="452" rx="16.5" ry="10" transform="rotate(8 1181.5 452)" fill="url(#gHole)"/>
<ellipse cx="1174" cy="449" rx="27" ry="15.5" transform="rotate(6 1174 449)" fill="none" stroke="#d8d8d8" stroke-width="5"/>
<rect x="787" y="90" width="833.5" height="50" fill="#f8f8f8"/>
<g fill="none" stroke="#3c3c3c" stroke-width="1.5" stroke-linejoin="round"><path d="M793.8 108.5 H814.3 V128.7 H793.8 Z M793.8 108.5 L803.6 98.4 H824.4 L814.3 108.5 M824.4 98.4 V113.8"/><circle cx="824" cy="121.3" r="7" fill="#f8f8f8" stroke-width="1.3"/><path d="M824 116.5 V126 M819.3 121.3 H828.7" stroke-width="1.3"/></g>
<path d="M839.30 99.2 V127.8 M839.3 99.20 H868.8 M845.20 99.2 V127.8 M839.3 104.92 H868.8 M851.10 99.2 V127.8 M839.3 110.64 H868.8 M857.00 99.2 V127.8 M839.3 116.36 H868.8 M862.90 99.2 V127.8 M839.3 122.08 H868.8 M868.80 99.2 V127.8 M839.3 127.80 H868.8" stroke="#3c3c3c" stroke-width="1.3" fill="none"/>
<circle cx="865.9" cy="123.2" r="6.9" fill="#f8f8f8" stroke="#3c3c3c" stroke-width="1.3"/><path d="M865.9 118.6 V127.8 M861.3 123.2 H870.5" stroke="#3c3c3c" stroke-width="1.3"/>
<text x="883" y="109" font-family="Liberation Sans" font-weight="bold" font-size="5.6" fill="#3c3c3c" textLength="13" lengthAdjust="spacingAndGlyphs">AUTO</text>
<path d="M899.6 99.2 L918.2 105.1 L912.7 122.3 L895 116.5 Z" fill="none" stroke="#3c3c3c" stroke-width="1.3"/>
<path d="M893.7 112.4 L888 118.5" stroke="#3c3c3c" stroke-width="1.4"/><path d="M884.5 116.2 L885.5 124.3 L891.5 119.6 Z" fill="none" stroke="#3c3c3c" stroke-width="1.4"/>
<rect x="887.4" y="127.3" width="29.4" height="3.3" rx="1.6" fill="none" stroke="#3c3c3c" stroke-width="1.4"/>
<g fill="none" stroke="#3c3c3c" stroke-width="1.4"><rect x="928.2" y="99.3" width="31.5" height="31.2"/><rect x="932.3" y="102.2" width="24.7" height="8.8"/><rect x="932.3" y="113.8" width="7" height="13"/><rect x="942.3" y="113.8" width="14.7" height="5.4"/><rect x="942.3" y="121.5" width="14.7" height="5.4"/></g>
<g fill="none" stroke="#cbcbcb" stroke-width="1.5"><path d="M988.1999999999999 103.1 V126.3 H982.4 V98.3 H1002.4 L1005.6 101.5 V103.1"/><path d="M988.1999999999999 103.1 H1008.0 L1011.8 106.9 V131.6 H988.1999999999999 Z"/></g>
<ellipse cx="1000.1" cy="117.9" rx="4.6" ry="7.4" fill="none" stroke="#cbcbcb" stroke-width="1.5"/>
<g fill="none" stroke="#cbcbcb" stroke-width="1.5"><path d="M1032.2 103.1 V126.3 H1026.4 V98.3 H1046.4 L1049.6000000000001 101.5 V103.1"/><path d="M1032.2 103.1 H1052.0 L1055.8000000000002 106.9 V131.6 H1032.2 Z"/></g>
<path d="M1040.3 126 V111 H1046.5 Q1050.5 111 1050.5 115 Q1050.5 119 1046.5 119 H1040.3" fill="none" stroke="#cbcbcb" stroke-width="1.5"/>
<g fill="none" stroke="#cbcbcb" stroke-width="1.4"><path d="M1071.8 102.8 H1099.2" stroke-width="1.6"/><rect x="1071.8" y="106.3" width="27.4" height="2.3" rx="1"/><rect x="1071.8" y="111" width="27.4" height="3" rx="1.4"/><rect x="1071.8" y="116.7" width="27.4" height="3.6" rx="1.6"/><rect x="1071.8" y="123.2" width="27.4" height="4.2" rx="1.8"/></g>
<path d="M1123.7 99.5 V130.6 M1557.6 99.5 V130.6" stroke="#9a9a9a" stroke-width="1.5"/>
<g fill="none" stroke="#cbcbcb" stroke-width="1.4" stroke-linejoin="round"><rect x="1158.5" y="112.8" width="3.8" height="3.8"/><path d="M1160.4 97.9 L1166 103.5 H1162.2 V108.6 H1158.6 V103.5 H1154.8 Z"/><path d="M1160.4 131.5 L1166 125.9 H1162.2 V120.8 H1158.6 V125.9 H1154.8 Z"/><path d="M1143.6 114.7 L1149.2 109.1 V112.9 H1154.3 V116.5 H1149.2 V120.3 Z"/><path d="M1177.2 114.7 L1171.6 109.1 V112.9 H1166.5 V116.5 H1171.6 V120.3 Z"/></g>
<g fill="none" stroke="#cbcbcb" stroke-width="1.4" stroke-linejoin="round"><path d="M1190.5 120.5 A14.3 14.3 0 0 1 1212 102"/><path d="M1210.4 108.4 L1217.7 101.5 L1220.4 111.5 Z"/><path d="M1205 108.6 L1216.2 119.7 L1205 130.8 L1193.9 119.7 Z"/></g>
<g fill="none" stroke="#cbcbcb" stroke-width="1.4"><rect x="1233.1" y="98.9" width="31.7" height="31.7" stroke-dasharray="2.2 2.8"/><rect x="1233.1" y="113.1" width="17.4" height="17.5" fill="#f8f8f8"/><path d="M1252.6 111.5 L1260.5 104.1 M1255 103.5 H1261 V109.5"/></g>
<g fill="none" stroke="#cbcbcb" stroke-width="1.5" stroke-linejoin="round"><path d="M1293.3 99.4 L1311.8 104.1 L1307.5 122.1 L1289 117.4 Z"/><path d="M1287.5 112.6 Q1283 115 1281.5 119"/><path d="M1278.5 116.3 L1281.1 124.2 L1286.4 118.9 Z"/><rect x="1281.1" y="127.4" width="29.6" height="3.2" rx="1.6"/></g>
<g fill="none" stroke="#cbcbcb" stroke-width="1.5"><rect x="1325.3" y="99.2" width="28.4" height="13.4"/><rect x="1325.3" y="116.3" width="28.4" height="13.9"/><path d="M1325.3 114.4 H1353.7" stroke-dasharray="1.2 1.6" stroke-width="1.2"/></g>
<defs><pattern id="hatch" width="3" height="3" patternUnits="userSpaceOnUse" patternTransform="rotate(45)"><rect width="3" height="3" fill="#f8f8f8"/><path d="M0 0 V3" stroke="#cbcbcb" stroke-width="1.4"/></pattern></defs>
<g fill="none" stroke="#cbcbcb" stroke-width="1.5"><rect x="1368.3" y="107.6" width="23.2" height="23"/><rect x="1378.3" y="99.2" width="24" height="23.4"/><rect x="1378.3" y="107.6" width="13.2" height="15" fill="url(#hatch)" stroke-width="1.8"/></g>
<g fill="none" stroke="#cbcbcb" stroke-width="1.5"><path d="M1414.1 99.4 H1445.3 V130.5 H1431 V112.4 H1414.1 Z"/><rect x="1415.8" y="112.4" width="11.9" height="18.1" fill="url(#hatch)"/></g>
<g fill="none" stroke="#cbcbcb" stroke-width="1.5" stroke-linejoin="round"><path d="M1459.4 109 H1480.4 V129.9 H1459.4 Z M1459.4 109 L1469 99.4 H1490.5 L1480.4 109 M1490.5 99.4 V119.8 L1480.4 129.9"/><path d="M1464.5 110.7 L1471.8 129.5" stroke-dasharray="1 1.5" stroke-width="1"/></g>
<g fill="none" stroke="#cbcbcb" stroke-width="1.5"><path d="M1504.7 99.4 H1529 V104.4 H1520 V129.9 H1513.2 V104.4 H1504.7 Z"/></g>
<text x="1523.5" y="130.5" font-family="Liberation Sans" font-size="19" fill="none" stroke="#cbcbcb" stroke-width="1.1">a</text>
<g fill="none" stroke="#3c3c3c" stroke-width="1.4" stroke-linejoin="round"><path d="M1578.2 105.6 H1591.5 V113 Q1588 114 1589 117 Q1590 119 1591.5 118.5 V118.8 H1604.3 V131.6 H1578.2 Z"/><path d="M1578.2 118.8 H1583 Q1584 121.5 1586.5 121.5 Q1589 121.5 1589.5 118.8 M1591.5 118.8 V124 Q1594 125 1592.5 127.5 Q1591.3 129 1591.5 131.6"/><path d="M1593 105.6 Q1597 105 1596 102 L1601.4 98.2 L1610.7 107.3 L1602.5 115.5 Q1600 113 1597.5 114.5 Q1595.5 116.5 1597 118.8"/></g>
<path d="M1514 397.6 H1557.5 Q1560.5 397.6 1560.8 400.6 L1562.144 427 Q1562.444 430 1559.444 430 H1515.944 Q1512.944 430 1512.644 427 L1510.7 400.6 Q1511 397.6 1514 397.6 Z" fill="#ececec" stroke="#666" stroke-width="1.4"/>
<path d="M1523 404 L1549 424 M1549 404 L1523 424" stroke="#555" stroke-width="2.2" stroke-linecap="round"/>
<path d="M1518 444 H1562 Q1565 444 1565.3 447 L1566.68 474 Q1566.98 477 1563.98 477 H1519.98 Q1516.98 477 1516.68 474 L1514.7 447 Q1515 444 1518 444 Z" fill="#ececec" stroke="#666" stroke-width="1.4"/>
<text x="1519" y="454.5" font-family="Liberation Sans" font-weight="bold" font-size="4.5" fill="#666">AUTO</text>
<path d="M1539 449 L1557 453 L1554 465 L1537 461 Z" fill="none" stroke="#555" stroke-width="1.5"/>
<path d="M1524 465 L1532 459 M1521 461 L1523 467 L1528 465 Z" fill="none" stroke="#555" stroke-width="1.3"/>
<rect x="1525" y="469" width="34" height="3.5" rx="1.7" fill="#ddd" stroke="#666" stroke-width="1.2"/>
<path d="M1522.5 492.5 H1568 Q1571 492.5 1571.3 495.5 L1572.71 523 Q1573.01 526 1570.01 526 H1524.51 Q1521.51 526 1521.21 523 L1519.2 495.5 Q1519.5 492.5 1522.5 492.5 Z" fill="#ececec" stroke="#666" stroke-width="1.4"/>
<g fill="none" stroke="#555" stroke-width="1.5"><rect x="1527" y="497" width="35" height="7" rx="1"/><rect x="1528" y="508" width="7.5" height="13" rx="1"/><rect x="1543" y="508" width="19.5" height="5" rx="1"/><rect x="1544" y="516" width="19.5" height="5" rx="1"/></g>
<path d="M1527 541.4 H1572 Q1575 541.4 1575.3 544.4 L1576.806 573.5 Q1577.106 576.5 1574.106 576.5 H1529.106 Q1526.106 576.5 1525.806 573.5 L1523.7 544.4 Q1524 541.4 1527 541.4 Z" fill="#ececec" stroke="#666" stroke-width="1.4"/>
<path d="M1542.3 553.5 V550.5 Q1542.3 547.5 1546 547.5 H1556 Q1559.3 547.5 1559.6 551 L1560.2 558.5" fill="none" stroke="#4a4a4a" stroke-width="2.2" stroke-linecap="round"/><path d="M1540.5 558.3 H1562.5 Q1563.5 558.3 1563.6 559.5 L1563.9 568.8 Q1563.9 569.9 1562.8 569.9 H1541.2 Q1540 569.9 1540 568.8 L1539.6 559.5 Q1539.6 558.3 1540.5 558.3 Z" fill="#4f4f4f"/>
<path d="M1530.6 591 H1579 Q1582 591 1582.3 594 L1583.98 626 Q1584.28 629 1581.28 629 H1532.8799999999999 Q1529.8799999999999 629 1529.58 626 L1527.3 594 Q1527.6 591 1530.6 591 Z" fill="#ececec" stroke="#666" stroke-width="1.4"/>
<path d="M1547 599 H1565 L1574 610 L1565 621 H1547 L1538 610 Z" fill="#dcdcdc" stroke="#555" stroke-width="1.5"/><ellipse cx="1556" cy="610" rx="6" ry="4.5" fill="#efefef" stroke="#555" stroke-width="1.5"/>
<path fill-rule="evenodd" fill="#3aae44" d="M1563.6 799.9 C1571 799.9 1575.9 804.5 1575.9 811.2 C1575.9 818 1571 822.5 1563.6 822.5 C1556.3 822.5 1551.3 818 1551.3 811.2 C1551.3 804.5 1556.3 799.9 1563.6 799.9 Z M1563.7 805.1 C1561 805.1 1559.2 807.5 1559.2 811.1 C1559.2 814.8 1561 817.1 1563.7 817.1 C1566.4 817.1 1568.2 814.8 1568.2 811.1 C1568.2 807.5 1566.4 805.1 1563.7 805.1 Z"/>
<path fill="#3aae44" d="M1576 803.8 L1584.5 800 L1590.5 800 L1592.8 822 L1584.7 822 L1583.3 809.2 L1577 811.3 Z"/>
<g fill="none" stroke="#36b04a" stroke-width="2" stroke-linecap="round" stroke-linejoin="round"><path d="M932.8 356.5 L950.5 347.2 Q954.2 345.6 955.3 348.8 Q956 351.2 953.2 353 L937 360.5 L932.5 360.5 Z"/><path d="M930.5 364 H958.5" stroke-width="2.2"/></g>
</g>
</svg>
<div id="winborder" class="a" style="left:34px;top:26px;width:1920px;height:1080px;border-radius:10px;box-shadow:inset 0 0 0 1px rgba(255,255,255,0.16);pointer-events:none;z-index:5"></div>
<div class="a" style="left:1569px;top:1051px;width:375px;height:44px;border:1.5px solid #3aa443;border-radius:4px;background:#fff;overflow:hidden"><div class="a" style="left:0;top:0;width:8px;height:44px;background:#2f9a38"></div></div>
<div class="t" style="left:1584px;top:1060px;font-size:12.9px;color:#333">Le traitement du modèle &#39;Pencil_Case_Roll.stl&#39; avec</div>
<div class="t" style="left:1584px;top:1075px;font-size:12.9px;color:#333">plus de 1 million de triangles peut être lent. Il est..</div>
<div class="t" style="left:1878px;top:1075px;font-size:12.9px;color:#3aa443;text-decoration:underline">Plus</div>
<svg style="left:1910px;top:1062px" width="24" height="24" viewBox="0 0 24 24"><rect x="2" y="2" width="20" height="20" rx="3" fill="#efefef"/><path d="M5 5 L19 19 M19 5 L5 19" stroke="#999" stroke-width="1.5"/></svg>
</div></div></body></html>
